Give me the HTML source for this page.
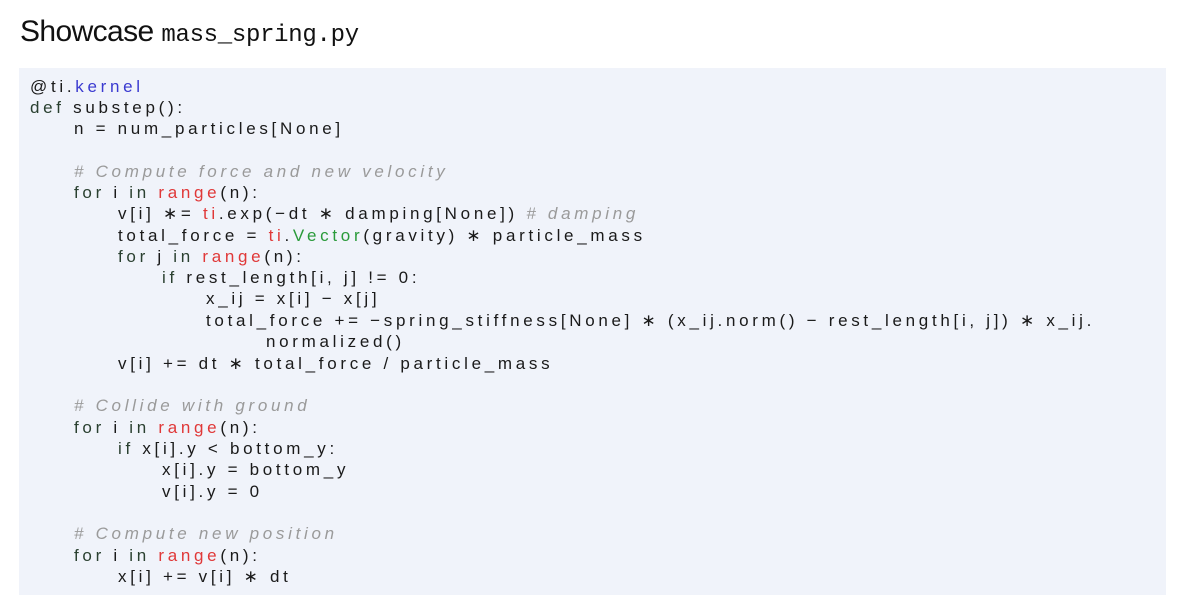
<!DOCTYPE html>
<html><head><meta charset="utf-8"><style>
body{margin:0;width:1177px;height:595px;background:#fff;overflow:hidden;position:relative;font-family:"Liberation Sans",sans-serif;}
.t{position:absolute;left:20px;top:15px;font-size:30px;color:#111;white-space:nowrap;letter-spacing:-0.6px}
.t code{font-family:"Liberation Mono",monospace;font-size:24px;letter-spacing:-0.3px}
.box{position:absolute;left:19px;top:68px;width:1147px;height:527px;background:#f0f3fa}
.l{position:absolute;white-space:pre;font-size:17px;letter-spacing:3.7px;color:#1a1a1a;line-height:20px}
.k{color:#2a4030}.b{color:#3a3ad0}.r{color:#e03838}.g{color:#2a9a3a}.c{color:#9a9a9a;font-style:italic}
</style></head><body>
<div class="t">Showcase <code>mass_spring.py</code></div>
<div class="box"></div>
<div class="l" style="left:30px;top:77px">@ti.<span class="b">kernel</span></div>
<div class="l" style="left:30px;top:98px"><span class="k">def</span> substep():</div>
<div class="l" style="left:74px;top:119px">n = num_particles[None]</div>
<div class="l c" style="left:74px;top:162px"># Compute force and new velocity</div>
<div class="l" style="left:74px;top:183px"><span class="k">for</span> i <span class="k">in</span> <span class="r">range</span>(n):</div>
<div class="l" style="left:118px;top:204px">v[i] ∗= <span class="r">ti</span>.exp(−dt ∗ damping[None]) <span class="c"># damping</span></div>
<div class="l" style="left:118px;top:226px">total_force = <span class="r">ti</span>.<span class="g">Vector</span>(gravity) ∗ particle_mass</div>
<div class="l" style="left:118px;top:247px"><span class="k">for</span> j <span class="k">in</span> <span class="r">range</span>(n):</div>
<div class="l" style="left:162px;top:268px"><span class="k">if</span> rest_length[i, j] != 0:</div>
<div class="l" style="left:206px;top:289px">x_ij = x[i] − x[j]</div>
<div class="l" style="left:206px;top:311px">total_force += −spring_stiffness[None] ∗ (x_ij.norm() − rest_length[i, j]) ∗ x_ij.</div>
<div class="l" style="left:266px;top:332px">normalized()</div>
<div class="l" style="left:118px;top:354px">v[i] += dt ∗ total_force / particle_mass</div>
<div class="l c" style="left:74px;top:396px"># Collide with ground</div>
<div class="l" style="left:74px;top:418px"><span class="k">for</span> i <span class="k">in</span> <span class="r">range</span>(n):</div>
<div class="l" style="left:118px;top:439px"><span class="k">if</span> x[i].y &lt; bottom_y:</div>
<div class="l" style="left:162px;top:460px">x[i].y = bottom_y</div>
<div class="l" style="left:162px;top:482px">v[i].y = 0</div>
<div class="l c" style="left:74px;top:524px"># Compute new position</div>
<div class="l" style="left:74px;top:546px"><span class="k">for</span> i <span class="k">in</span> <span class="r">range</span>(n):</div>
<div class="l" style="left:118px;top:567px">x[i] += v[i] ∗ dt</div>
</body></html>
